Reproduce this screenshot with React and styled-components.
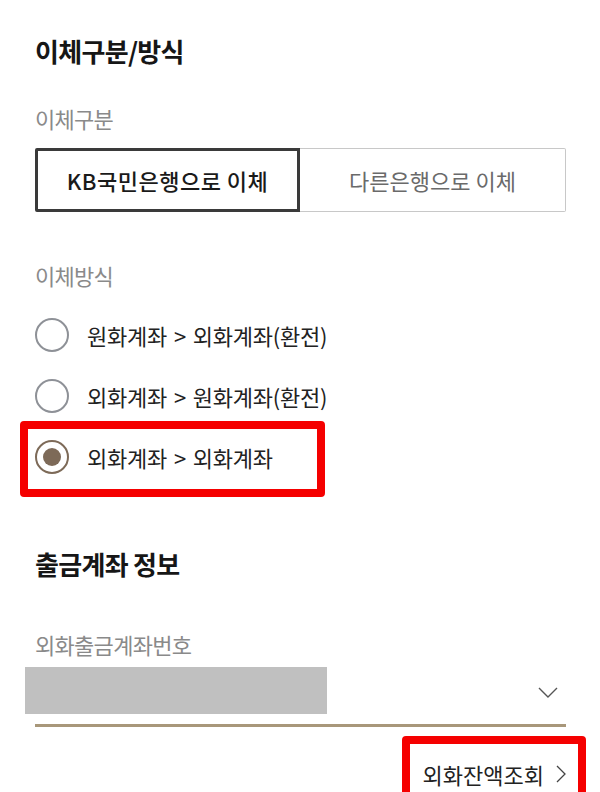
import React, { useState } from 'react'
import styled, { createGlobalStyle } from 'styled-components'

const GlobalStyle = createGlobalStyle`
    html, body {
        margin: 0;
        padding: 0;
        background: #ffffff;
    }
    body {
        font-family: "Noto Sans CJK KR", "Noto Sans", sans-serif;
        color: #1a1a1a;
    }
`

const methods = [
    '원화계좌 > 외화계좌(환전)',
    '외화계좌 > 원화계좌(환전)',
    '외화계좌 > 외화계좌',
]

function App() {
    const [kind, setKind] = useState('kb')
    const [method, setMethod] = useState(2)

    return (
        <Page>
            <GlobalStyle />
            <SectionTitle>이체구분/방식</SectionTitle>

            <FieldLabel $top={33}>이체구분</FieldLabel>
            <Segmented>
                <SegButton $active={kind === 'kb'} onClick={() => setKind('kb')}>
                    KB국민은행으로 이체
                </SegButton>
                <SegButton $active={kind === 'other'} onClick={() => setKind('other')}>
                    다른은행으로 이체
                </SegButton>
            </Segmented>

            <FieldLabel $top={49}>이체방식</FieldLabel>
            <RadioList>
                {methods.map((m, i) => (
                    <RadioRow key={m} onClick={() => setMethod(i)}>
                        <RadioCircle $checked={method === i} />
                        <RadioText>{m}</RadioText>
                        {i === 2 && <Highlight $left={-15} $top={-5} $width={305} $height={76} />}
                    </RadioRow>
                ))}
            </RadioList>

            <SectionTitle $top={57}>출금계좌 정보</SectionTitle>

            <FieldLabel $top={46}>외화출금계좌번호</FieldLabel>
            <SelectField>
                <Redacted />
                <Chevron viewBox="0 0 20 12" aria-hidden="true">
                    <path d="M1 1 L10 10 L19 1" fill="none" stroke="#555" strokeWidth="1.4" />
                </Chevron>
            </SelectField>

            <LinkRow>
                <BalanceLink>
                    외화잔액조회
                    <LinkArrow viewBox="0 0 10 18" aria-hidden="true">
                        <path d="M1 1 L9 9 L1 17" fill="none" stroke="#444" strokeWidth="1.3" />
                    </LinkArrow>
                    <Highlight $left={-21} $top={-24} $width={184} $height={70} />
                </BalanceLink>
            </LinkRow>
        </Page>
    )
}

export default App

const Page = styled.div`
    position: relative;
    width: 600px;
    height: 792px;
    box-sizing: border-box;
    padding: 31px 34px 0 35px;
    overflow: hidden;
`

const SectionTitle = styled.h2`
    margin: ${({ $top }) => $top || 0}px 0 0;
    font-size: 26px;
    font-weight: 700;
    line-height: 40px;
    letter-spacing: -0.7px;
    color: #161616;
`

const FieldLabel = styled.div`
    margin-top: ${({ $top }) => $top}px;
    font-size: 22px;
    line-height: 28px;
    letter-spacing: -0.7px;
    color: #8a8a8a;
`

const Segmented = styled.div`
    display: grid;
    grid-template-columns: 265px 1fr;
    height: 64px;
    margin-top: 16px;
`

const SegButton = styled.button`
    display: flex;
    align-items: center;
    justify-content: center;
    box-sizing: border-box;
    height: 64px;
    padding: 0;
    font-family: inherit;
    font-size: 22px;
    background: #ffffff;
    cursor: pointer;
    border: ${({ $active }) => ($active ? '3px solid #3a3a3a' : '1px solid #c8c8c8')};
    border-left-width: ${({ $active }) => ($active ? '3px' : '0')};
    border-radius: ${({ $active }) => ($active ? '2px 0 0 2px' : '0 2px 2px 0')};
    color: ${({ $active }) => ($active ? '#1a1a1a' : '#6a6a6a')};
    font-weight: ${({ $active }) => ($active ? 500 : 400)};
    letter-spacing: ${({ $active }) => ($active ? '0.5px' : '0')};
`

const RadioList = styled.div`
    display: flex;
    flex-direction: column;
    margin-top: 15px;
`

const RadioRow = styled.label`
    position: relative;
    display: flex;
    align-items: center;
    gap: 18px;
    height: 61px;
    cursor: pointer;
`

const RadioCircle = styled.span`
    position: relative;
    flex: none;
    width: 34px;
    height: 34px;
    box-sizing: border-box;
    border-radius: 50%;
    border: 2.5px solid ${({ $checked }) => ($checked ? '#7d6a58' : '#8e9197')};

    &::after {
        content: '';
        display: ${({ $checked }) => ($checked ? 'block' : 'none')};
        position: absolute;
        left: 50%;
        top: 50%;
        width: 18px;
        height: 18px;
        margin: -9px 0 0 -9px;
        border-radius: 50%;
        background: #7d6a58;
    }
`

const RadioText = styled.span`
    font-size: 22px;
    letter-spacing: -0.2px;
    word-spacing: 2px;
    color: #222;
`

const Highlight = styled.span`
    position: absolute;
    left: ${({ $left }) => $left}px;
    top: ${({ $top }) => $top}px;
    width: ${({ $width }) => $width}px;
    height: ${({ $height }) => $height}px;
    box-sizing: border-box;
    border: 8px solid #f50000;
    border-radius: 4px;
    pointer-events: none;
`

const SelectField = styled.div`
    display: flex;
    align-items: center;
    justify-content: space-between;
    height: 57px;
    margin-top: 9px;
    border-bottom: 3px solid #a8977a;
`

const Redacted = styled.div`
    width: 302px;
    height: 47px;
    margin-left: -10px;
    align-self: flex-start;
    background: #c0c0c0;
`

const Chevron = styled.svg`
    width: 20px;
    height: 12px;
    margin-right: 8px;
    margin-bottom: 6px;
`

const LinkRow = styled.div`
    display: flex;
    justify-content: flex-end;
    margin-top: 33px;
`

const BalanceLink = styled.a`
    position: relative;
    display: flex;
    align-items: center;
    gap: 12px;
    font-size: 22px;
    letter-spacing: 0;
    line-height: 28px;
    color: #222;
    cursor: pointer;
`

const LinkArrow = styled.svg`
    width: 10px;
    height: 18px;
`
